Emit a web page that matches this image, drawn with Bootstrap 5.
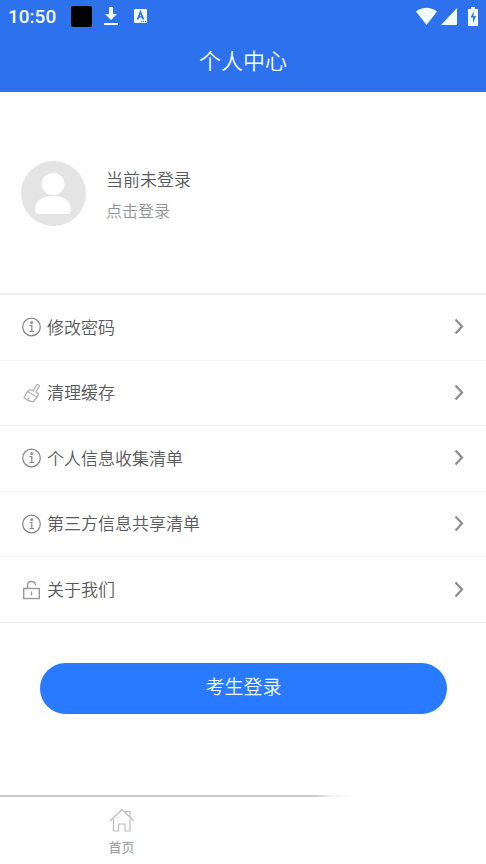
<!DOCTYPE html>
<html lang="zh-CN">
<head>
<meta charset="utf-8">
<meta name="viewport" content="width=device-width, initial-scale=1">
<title>个人中心</title>
<link href="https://cdn.jsdelivr.net/npm/bootstrap@5.3.0/dist/css/bootstrap.min.css" rel="stylesheet">
<style>
body { font-family: "Noto Sans CJK SC", sans-serif; font-weight: 350; background: #fefefe; color: #58595b; }
svg { display: block; flex: none; }
.app-top { background: #2e71ec; color: #f2fbff; }
.status { height: 32px; padding: 0 8px; }
.clock { font: 500 19px/32px Roboto, sans-serif; width: 63px; padding-top: 2px; }
.status-black { width: 21px; height: 21px; background: #000; border-radius: 2px; }
.page-title { font-size: 22px; font-weight: 350; line-height: 32px; padding: 11px 0 17px; }
.profile { height: 201px; padding: 2px 21px 0; gap: 20px; }
.who { font-size: 17px; line-height: 32px; }
.who-hint { font-size: 16px; line-height: 30px; color: #929395; }
.menu { height: 330px; border-top: 2px solid #eff0f2; display: grid; grid-auto-rows: 1fr; }
.menu-row { border: 0; border-bottom: 1px solid #f3f5f5; padding: 0 21px 0 22px; gap: 6px; font-size: 17px; font-weight: 350; color: #58595b; background: none; }
.menu-row:last-child { border-color: #ebeeee; }
.menu-row span { padding-bottom: 2px; }
.login-area { padding: 40px 39px 0 40px; }
.login-btn { background: #297aff; color: #f2fbff; height: 51px; font-size: 19px; font-weight: 350; line-height: 24px; padding: 0 0 5px; }
.login-btn:hover { background: #1d6df0; color: #fff; }
.tabs { height: 69px; }
.tabs::before { content: ""; display: block; height: 2px; background: linear-gradient(90deg, #cbcbcb 65%, #f2f2f2 68%, #fefefe 73%); }
.tab-home { color: #8c8d8f; font-size: 13px; line-height: 20px; padding-top: 11px; gap: 5px; }
</style>
</head>
<body>
<div class="d-flex flex-column min-vh-100">
  <header class="app-top">
    <div class="status d-flex align-items-center">
      <span class="clock">10:50</span>
      <span class="status-black"></span>
      <svg class="ms-2" width="22" height="22" viewBox="-5 0 22 22" fill="currentColor" aria-hidden="true"><path d="M4 2h4v7h4l-6 6-6-6h4zM-1 18h14v2H-1z"/></svg>
      <svg class="ms-2 ps-1" width="18" height="16" viewBox="0 0 14 16" aria-hidden="true"><rect x="0" y="1" width="13" height="14" rx="1" fill="#f2fbff"/><path d="M3.500 11.500 6.500 4l3 7.500M4.500 9h4" fill="none" stroke="#2e71ec" stroke-width="1.700"/><path d="M7 13.500h1m1 0h1m1 0h1" stroke="#2e71ec"/></svg>
      <svg class="ms-auto" width="21" height="18" viewBox="0 0 21 18" fill="currentColor" aria-hidden="true"><path d="M0 4.500Q10.500-3 21 4.500L10.500 18z"/></svg>
      <svg class="ms-1" width="16" height="17" viewBox="0 0 16 17" fill="currentColor" aria-hidden="true"><path d="M16 0v17H0z"/></svg>
      <svg class="ms-2" width="13" height="19" viewBox="-3 0 13 19" aria-hidden="true"><path d="M3 0h4v2h3v17H0V2h3z" fill="#f2fbff"/><path d="M6 4 2.500 10.500H5V16l3-7H5.500z" fill="#2e71ec"/></svg>
    </div>
    <h1 class="page-title text-center m-0">个人中心</h1>
  </header>

  <main class="flex-grow-1">
    <section class="profile d-flex align-items-center">
      <svg width="65" height="65" viewBox="0 0 65 65" aria-hidden="true"><circle cx="32.500" cy="32.500" r="32.500" fill="#e4e4e4"/><ellipse cx="32" cy="23" rx="11.500" ry="11" fill="#fefefe"/><path d="M14 49c0-10 8-14 18-14s18 4 18 14q0 4-4 4H18q-4 0-4-4z" fill="#fefefe"/></svg>
      <div>
        <div class="who">当前未登录</div>
        <a href="#login" class="who-hint d-block text-decoration-none">点击登录</a>
      </div>
    </section>

    <nav class="menu" aria-label="个人中心">
      <button type="button" class="menu-row d-flex align-items-center text-start">
        <svg width="19" height="20" viewBox="0 0 19 20" fill="none" stroke="#858585" stroke-width="1.200" aria-hidden="true"><circle cx="9.500" cy="10" r="8.800"/><path d="M7.500 8.500h2.300v6M7.500 14.500h4.500"/><circle cx="9.600" cy="5.700" r=".8"/></svg>
        <span>修改密码</span>
        <svg class="ms-auto" width="12" height="18" viewBox="0 0 12 18" fill="none" stroke="#8d8d8d" stroke-width="2.200" aria-hidden="true"><path d="M2.500 1.500 9 8.500l-6.500 7"/></svg>
      </button>
      <button type="button" class="menu-row d-flex align-items-center text-start">
        <svg width="19" height="20" viewBox="0 0 19 20" fill="none" stroke="#b2b2b2" stroke-width="1.300" stroke-linejoin="round" aria-hidden="true"><path d="m8 6.500 3 1.500 3.500-6q1.500-1 3 .8L13.800 9l2.700 2-1.500 3L5.500 8.500 8 6.500M5.500 8.500 2 14.500q4.500 4.500 9.500 4l3.500-4.500M5.500 16.500l2-2"/></svg>
        <span>清理缓存</span>
        <svg class="ms-auto" width="12" height="18" viewBox="0 0 12 18" fill="none" stroke="#8d8d8d" stroke-width="2.200" aria-hidden="true"><path d="M2.500 1.500 9 8.500l-6.500 7"/></svg>
      </button>
      <button type="button" class="menu-row d-flex align-items-center text-start">
        <svg width="19" height="20" viewBox="0 0 19 20" fill="none" stroke="#858585" stroke-width="1.200" aria-hidden="true"><circle cx="9.500" cy="10" r="8.800"/><path d="M7.500 8.500h2.300v6M7.500 14.500h4.500"/><circle cx="9.600" cy="5.700" r=".8"/></svg>
        <span>个人信息收集清单</span>
        <svg class="ms-auto" width="12" height="18" viewBox="0 0 12 18" fill="none" stroke="#8d8d8d" stroke-width="2.200" aria-hidden="true"><path d="M2.500 1.500 9 8.500l-6.500 7"/></svg>
      </button>
      <button type="button" class="menu-row d-flex align-items-center text-start">
        <svg width="19" height="20" viewBox="0 0 19 20" fill="none" stroke="#858585" stroke-width="1.200" aria-hidden="true"><circle cx="9.500" cy="10" r="8.800"/><path d="M7.500 8.500h2.300v6M7.500 14.500h4.500"/><circle cx="9.600" cy="5.700" r=".8"/></svg>
        <span>第三方信息共享清单</span>
        <svg class="ms-auto" width="12" height="18" viewBox="0 0 12 18" fill="none" stroke="#8d8d8d" stroke-width="2.200" aria-hidden="true"><path d="M2.500 1.500 9 8.500l-6.500 7"/></svg>
      </button>
      <button type="button" class="menu-row d-flex align-items-center text-start">
        <svg width="19" height="20" viewBox="0 0 19 20" fill="none" stroke="#999" stroke-width="1.400" aria-hidden="true"><rect x="1.700" y="8.500" width="15.600" height="10"/><path d="M5.500 8.500V5.500Q5.500 1.500 9.500 1.500t4 4M9.500 11.500v4"/></svg>
        <span>关于我们</span>
        <svg class="ms-auto" width="12" height="18" viewBox="0 0 12 18" fill="none" stroke="#8d8d8d" stroke-width="2.200" aria-hidden="true"><path d="M2.500 1.500 9 8.500l-6.500 7"/></svg>
      </button>
    </nav>

    <div class="login-area">
      <button type="button" class="login-btn btn rounded-pill border-0 w-100">考生登录</button>
    </div>
  </main>

  <nav class="tabs" aria-label="主导航">
    <div class="row g-0">
      <div class="col-6">
        <a href="#home" class="tab-home d-flex flex-column align-items-center text-decoration-none">
          <svg width="26" height="24" viewBox="0 0 26 24" fill="none" stroke="#bcbcbc" stroke-width="1.200" aria-hidden="true"><path d="M1 13 13 1.500 25 13M4.500 11v12h5v-7h6.500v7h5V11M17 5V3.500h4V9"/></svg>
          <span>首页</span>
        </a>
      </div>
    </div>
  </nav>
</div>
<script src="https://cdn.jsdelivr.net/npm/bootstrap@5.3.0/dist/js/bootstrap.bundle.min.js"></script>
</body>
</html>
